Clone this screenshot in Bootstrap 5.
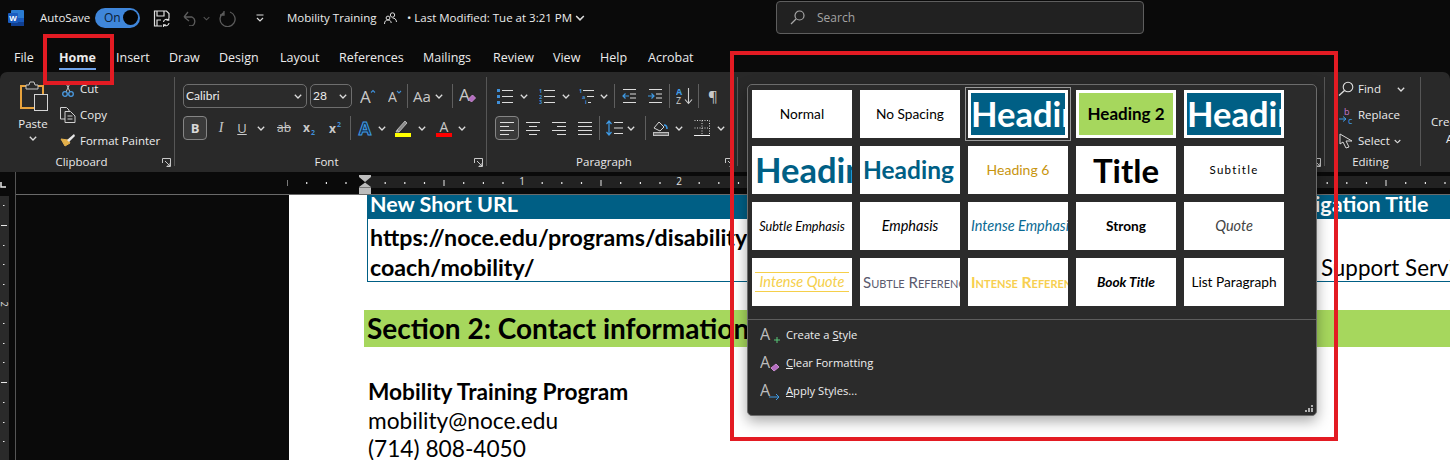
<!DOCTYPE html>
<html lang="en">
<head>
<meta charset="utf-8">
<title>Mobility Training - Word</title>
<link href="https://cdn.jsdelivr.net/npm/bootstrap@5.3.0/dist/css/bootstrap.min.css" rel="stylesheet">
<style>
html,body{height:460px;overflow:hidden}
body{background:#0a0a0a;color:#ececec;font-family:"Open Sans","Liberation Sans",sans-serif;font-size:11.5px;line-height:16px;position:relative;width:1450px}
svg{display:block;flex:none}
.ri{display:flex;align-items:center;justify-content:center;flex:none;height:24px}
.l1{margin-left:1px}.l2{margin-left:2px}.l3{margin-left:3px}.l4{margin-left:4px}.l5{margin-left:5px}.l6{margin-left:6px}.l7{margin-left:7px}.l8{margin-left:8px}.l9{margin-left:9px}.l10{margin-left:10px}.l11{margin-left:11px}.l12{margin-left:12px}.l13{margin-left:13px}.l14{margin-left:14px}.l15{margin-left:15px}.l16{margin-left:16px}.l18{margin-left:18px}.l20{margin-left:20px}
/* title bar */
.tbar{height:36px;padding-left:8px}
.auto-lbl{margin-left:16px;width:55px}
.pill{width:45px;height:20px;border-radius:10px;background:#3f86da;margin-top:-1px;color:#0b2036;padding:0 2px 0 9px;font-size:12px}
.knob{width:15px;height:15px;border-radius:50%;background:#050505}
.ttl{margin-left:23px;width:97px;white-space:nowrap}
.mod{white-space:nowrap;width:165px;flex:none}
.srch{margin-left:191px;width:368px;height:33px;margin-top:-1px;background:#212121;border:1px solid #5e5e5e;border-radius:4px;padding-left:13px;color:#a3a3a3;gap:12px;font-size:12px}
/* tabs */
.tabs{height:36px;padding:14px 0 0 14px}
.tb{flex:none;position:relative;white-space:nowrap;font-size:12.5px}
.t45{width:45px}.t57{width:57px}.t53{width:53px}.t50{width:50px}.t61{width:61px}.t59{width:59px}.t84{width:84px}.t70{width:70px}.t60{width:60px}.t47{width:47px}.t48{width:48px}
.tb-on{font-weight:700}
.tb-on::after{content:"";display:block;width:37px;height:2px;background:#6fa3ea;margin-top:2px}
/* ribbon */
.rib{height:100px;background:#292929;border-radius:7px 7px 0 0;padding-top:5px}
.grp{height:89px;border-right:1px solid #565656;flex:none;display:flex;flex-direction:column;padding-top:7px}
.g-clip{width:175px}.g-font{width:312px;padding-left:8px}.g-para{width:251px}.g-sty{width:587px}.g-edit{width:96px}
.gbody{height:64px;flex:none}
.glbl{display:flex;height:16px;margin-top:6px;color:#e8e8e8}
.glbl-t{flex:1;text-align:center}
.launch{width:16px;display:flex;justify-content:center;align-items:center}
.g-clip .glbl{padding-left:5px}
.rows{display:flex;flex-direction:column;margin-top:-8px}
.r3{height:26px;flex:none;display:flex;align-items:center;white-space:nowrap}
.pst{width:32px;margin-left:17px;margin-top:-3px;height:67px}
.pst-t{margin-top:2px;text-align:center}
.ico{width:16px;height:16px;display:flex;justify-content:center;margin-right:4px}
.combo{height:24px;border:1px solid #6e6e6e;border-radius:5px;padding:0 4px 0 2px;background:#2b2b2b;font-family:"Lato",sans-serif;font-size:12px}
.cb1{width:124px}.cb2{width:42px;margin-left:3px}
.w8{width:8px}.w10{width:10px}.w14{width:14px}.w16{width:16px}.w17{width:17px}.w18{width:18px}.w20{width:20px}
.vd{width:1px;height:24px;background:#5f5f5f;flex:none}
.tog{width:24px;height:24px;background:#3a3a3a;border:1px solid #858585;border-radius:4px}
.tog-b{font-weight:700;color:#d8d8d8;font-size:13px}
.fi{font-size:14px;font-style:italic;font-family:"Liberation Serif",serif;color:#c8c8c8}
.fu{font-size:13px;text-decoration:underline;color:#c8c8c8}
.fs{font-size:12px;text-decoration:line-through;color:#c8c8c8}
.fa{font-size:15px;color:#c8c8c8}
.r2{margin-top:8px}
.gx{padding-left:10px;padding-top:36px;white-space:nowrap;line-height:17px;overflow:hidden;flex:1}
.gx-b{margin-left:15px}
/* ruler */
.rrow{height:23px}
.corner{width:16px;padding:10px 0 0 0;flex:none;border-right:1px solid #555}
.rline{border-bottom:1px solid #6a6a6a;flex:1;overflow:hidden;position:relative}
/* doc */
.drow{height:265px}
.vrl{width:16px;flex:none;border-right:1px solid #555}
.side{width:273px;flex:none}
.pg{flex:1;background:#fff;color:#000;font-family:"Lato",sans-serif;overflow:hidden;position:relative}
.dt{margin-left:78px;width:1200px;border:1px solid #005f85;border-top:0;font-size:21.5px;line-height:30px;font-weight:700}
.dt-h{height:24px;background:#005f85;color:#fff;line-height:18px;white-space:nowrap;padding-left:2px}
.dt-navh{margin-left:709px}
.dt-b{white-space:nowrap;padding:3px 0 0 2px;height:62px;position:relative;font-size:23.2px}
.dt-rgt{font-weight:400;margin-left:690px;font-size:22.4px}
.sec{margin:28px 0 0 75px;height:37px;width:1100px;background:#a6d75d;font-size:28px;font-weight:700;line-height:37px;padding-left:3px;white-space:nowrap}
.addr{margin:31px 0 0 79px;font-size:22.7px;line-height:28.6px}
/* gallery */
.gal{position:absolute;left:747px;top:84px;width:570px;height:332px;background:#2b2b2b;border:1px solid #6c6c6c;border-radius:5px;box-shadow:0 5px 14px rgba(0,0,0,.35);z-index:5;color:#eee;padding:5px 0 0 4px}
.ggrid{display:grid;grid-template-columns:repeat(5,100px);grid-auto-rows:48px;gap:8px}
.sty{background:#fff;color:#000;display:flex;align-items:center;justify-content:center;overflow:hidden;white-space:nowrap;font-family:"Lato",sans-serif;font-size:13.7px;position:relative}
.sty-l{justify-content:flex-start;padding-left:3px}
.sty-sel{outline:1px solid #9a9a9a;outline-offset:2px;overflow:visible}
.boxb{width:94px;height:42px;background:#005f85;color:#fff;font-weight:700;font-size:34.5px;overflow:hidden;display:flex;align-items:center;line-height:42px;padding-left:0}
.boxg{width:94px;height:42px;background:#a6d75d;font-weight:700;font-size:17px;display:flex;align-items:center;justify-content:center}
.h4s{color:#005f85;font-weight:700;font-size:34.5px}
.h5s{color:#005f85;font-weight:700;font-size:24.5px}
.h6s{color:#c8950e;font-size:14px}
.tts{font-weight:700;font-size:33px}
.sbt{font-size:11.5px;letter-spacing:1.3px}
.it{font-style:italic}
.sz11{font-size:12.7px}
.szi{font-size:14.5px}
.blu{color:#0a6a94}
.bd{font-weight:700}
.quo{font-style:italic;color:#444;font-size:14.5px}
.iq{font-style:italic;color:#f5cf4a;border-top:1px solid #f5cf4a;border-bottom:1px solid #f5cf4a;width:94px;text-align:center;line-height:18px;font-size:14.5px}
.sr{font-variant:small-caps;color:#5a5a6e;font-size:15px}
.ir{font-variant:small-caps;color:#f7cf50;font-weight:700;font-size:15.5px}
.gsep{height:1px;background:#5d5d5d;margin:13px 0 0 -4px}
.gmenu{padding:1px 0 0 8px}
.gm{height:28px;display:flex;align-items:center;gap:6px;font-size:11.2px}
.grip{position:absolute;right:3px;bottom:3px}
/* annotation boxes */
.redA{position:absolute;left:730px;top:51px;width:608px;height:390px;border:4px solid #e31b23;z-index:9}
.redB{position:absolute;left:43px;top:34px;width:71px;height:51px;border:4px solid #e31b23;z-index:9}
</style>
</head>
<body>
<svg width="0" height="0" class="position-absolute">
  <defs>
    <symbol id="chev" viewBox="0 0 8 5"><path d="M.8.8 4 4 7.2.8" fill="none" stroke="#dcdcdc" stroke-width="1.3"/></symbol>
    <symbol id="lnch" viewBox="0 0 9 9"><path d="M.5 5V.5h8v8H4.5M3 3l5 5M8 5v3H5" fill="none" stroke="#c8c8c8" stroke-width="1"/></symbol>
  </defs>
</svg>

<header class="tbar d-flex align-items-center">
  <svg width="16" height="16" viewBox="0 0 16 16"><rect x="3" y="0" width="13" height="16" rx="1" fill="#2b7cd3"/><rect x="3" y="8" width="13" height="4" fill="#185abd"/><rect x="3" y="12" width="13" height="4" fill="#103f91"/><rect x="0" y="3" width="10" height="10" rx="1" fill="#1a5cbf"/><text x="5" y="11" font-size="8" font-weight="700" fill="#fff" text-anchor="middle" font-family="Liberation Sans">W</text></svg>
  <span class="auto-lbl">AutoSave</span>
  <span class="pill d-flex align-items-center justify-content-between"><span>On</span><span class="knob"></span></span>
  <svg class="l13" width="17" height="17" viewBox="0 0 17 17"><path d="M9 16H1.5V1h12l2.500 2.500V8M4 1v5h7V1M4 16v-6h4" fill="none" stroke="#e0e0e0" stroke-width="1.200"/><path d="M10.500 12a3 3 0 0 1 5-2M16 13a3 3 0 0 1-5 2M15.800 8v2.300h-2.300M10.500 17v-2.300h2.300" fill="none" stroke="#e0e0e0" stroke-width="1.100"/></svg>
  <svg class="l13" width="15" height="15" viewBox="0 0 15 15"><path d="M1 6h8a5 5 0 0 1 0 9H6M1 6l4-5M1 6l5 4" fill="none" stroke="#5c5c5c" stroke-width="1.300"/></svg>
  <svg class="l5" width="7" height="5" viewBox="0 0 8 5"><path d="M.8.8 4 4 7.200.8" fill="none" stroke="#555" stroke-width="1.200"/></svg>
  <svg class="l9" width="17" height="17" viewBox="0 0 17 17"><path d="M11 2a7.500 7.500 0 1 1-6 .5M5 1v4H1" fill="none" stroke="#5c5c5c" stroke-width="1.300"/></svg>
  <svg class="l20" width="8" height="8" viewBox="0 0 8 8"><path d="M.500 1h7M1 4l3 3 3-3" fill="none" stroke="#dcdcdc" stroke-width="1.200"/></svg>
  <span class="ttl">Mobility Training</span>
  <svg width="13" height="13" viewBox="0 0 13 13"><circle cx="8.500" cy="3" r="2.200" fill="none" stroke="#dcdcdc"/><circle cx="4" cy="6" r="1.900" fill="none" stroke="#dcdcdc"/><path d="M.500 12c0-3 1.500-4 3.500-4s3 1 3.200 3M8.500 6c2 0 3.800 1 4 4" fill="none" stroke="#dcdcdc"/></svg>
  <span class="mod l10">• Last Modified: Tue at 3:21 PM</span>
  <svg class="l3" width="10" height="6" viewBox="0 0 8 5"><use href="#chev"/></svg>
  <div class="srch d-flex align-items-center">
    <svg width="15" height="15" viewBox="0 0 15 15"><circle cx="9.500" cy="5.500" r="4.500" fill="none" stroke="#a8a8a8" stroke-width="1.200"/><path d="M6 9 1 14" stroke="#a8a8a8" stroke-width="1.300"/></svg>
    <span>Search</span>
  </div>
</header>

<nav class="tabs d-flex align-items-start">
  <span class="tb t45">File</span>
  <span class="tb t57 tb-on">Home</span>
  <span class="tb t53">Insert</span>
  <span class="tb t50">Draw</span>
  <span class="tb t61">Design</span>
  <span class="tb t59">Layout</span>
  <span class="tb t84">References</span>
  <span class="tb t70">Mailings</span>
  <span class="tb t60">Review</span>
  <span class="tb t47">View</span>
  <span class="tb t48">Help</span>
  <span class="tb">Acrobat</span>
</nav>

<section class="rib d-flex">
  <div class="grp g-clip">
    <div class="gbody d-flex">
      <div class="pst">
        <svg width="32" height="33" viewBox="0 0 32 33"><rect x="4" y="5" width="22" height="22" fill="none" stroke="#e8a33d" stroke-width="2"/><path d="M9 8V4h3l1-3h4l1 3h3v4z" fill="#292929" stroke="#c8c8c8"/><rect x="17.500" y="13.500" width="13" height="16" fill="#292929" stroke="#d5d5d5"/></svg>
        <div class="pst-t">Paste</div>
        <svg class="mx-auto mt-1" width="8" height="5" viewBox="0 0 8 5"><use href="#chev"/></svg>
      </div>
      <div class="rows l11">
        <div class="r3"><span class="ico"><svg width="12" height="16" viewBox="0 0 12 16"><path d="M3 0l5 11M9 0 4 11" stroke="#bdbdbd" fill="none"/><circle cx="3" cy="13" r="2.300" fill="none" stroke="#4a9ae0" stroke-width="1.300"/><circle cx="9" cy="13" r="2.300" fill="none" stroke="#4a9ae0" stroke-width="1.300"/></svg></span>Cut</div>
        <div class="r3"><span class="ico"><svg width="16" height="16" viewBox="0 0 16 16"><path d="M5 12H.5V.5h6L9 3v1M5 4.500h5.500L15 9v6.500H5zM7.500 9h5M7.500 12h5" fill="none" stroke="#d0d0d0"/></svg></span>Copy</div>
        <div class="r3"><span class="ico"><svg width="16" height="14" viewBox="0 0 16 14"><path d="M1 6l4 7 5-3-2-3z" fill="#e3b04b" stroke="#e3b04b"/><path d="M7 7l7-6 1 2-6 6z" fill="#e8e8e8"/></svg></span>Format Painter</div>
      </div>
    </div>
    <div class="glbl"><span class="glbl-t">Clipboard</span><span class="launch"><svg width="9" height="9" viewBox="0 0 9 9"><use href="#lnch"/></svg></span></div>
  </div>

  <div class="grp g-font">
    <div class="gbody">
      <div class="d-flex align-items-center">
        <div class="combo cb1 d-flex align-items-center justify-content-between">Calibri<svg width="8" height="5" viewBox="0 0 8 5"><use href="#chev"/></svg></div>
        <div class="combo cb2 d-flex align-items-center justify-content-between">28<svg width="8" height="5" viewBox="0 0 8 5"><use href="#chev"/></svg></div>
        <svg class="l8" width="16" height="17" viewBox="0 0 16 17"><text x="0" y="15" font-size="17" fill="#c8c8c8" font-family="Open Sans">A</text><path d="M11 4.500l2-2 2 2" fill="none" stroke="#3f8fd8" stroke-width="1.100"/></svg>
        <svg class="l12" width="14" height="14" viewBox="0 0 14 14"><text x="0" y="13" font-size="14" fill="#c8c8c8" font-family="Open Sans">A</text><path d="M9 2l2 2 2-2" fill="none" stroke="#3f8fd8" stroke-width="1.100"/></svg>
        <span class="vd l5"></span>
        <span class="ri w16 l6 fa">Aa</span>
        <svg class="l5" width="8" height="5" viewBox="0 0 8 5"><use href="#chev"/></svg>
        <span class="vd l9"></span>
        <svg class="l6" width="17" height="18" viewBox="0 0 17 18"><text x="0" y="14" font-size="17" fill="#c8c8c8" font-family="Open Sans">A</text><path d="M9.500 12l4-4 3 3-4 4z" fill="#b46cc0" stroke="#c98bd2"/></svg>
      </div>
      <div class="d-flex align-items-center r2">
        <span class="ri tog tog-b">B</span>
        <span class="ri w8 l10 fi">I</span>
        <span class="ri w14 l10 fu">U</span>
        <svg class="l8" width="8" height="5" viewBox="0 0 8 5"><use href="#chev"/></svg>
        <span class="ri w16 l11 fs">ab</span>
        <svg class="l10" width="16" height="16" viewBox="0 0 16 16"><text x="1" y="12" font-size="12" font-weight="700" fill="#c8c8c8" font-family="Open Sans">x</text><text x="9" y="15" font-size="7" font-weight="700" fill="#3f8fd8" font-family="Open Sans">2</text></svg>
        <svg class="l10" width="16" height="16" viewBox="0 0 16 16"><text x="1" y="13" font-size="12" font-weight="700" fill="#c8c8c8" font-family="Open Sans">x</text><text x="9" y="7" font-size="7" font-weight="700" fill="#3f8fd8" font-family="Open Sans">2</text></svg>
        <span class="vd l6"></span>
        <svg class="l6" width="16" height="16" viewBox="0 0 16 16"><text x="8" y="14.500" text-anchor="middle" font-size="18" font-weight="700" fill="#16324a" stroke="#3f9be6" stroke-width="1" font-family="Open Sans">A</text></svg>
        <svg class="l5" width="8" height="5" viewBox="0 0 8 5"><use href="#chev"/></svg>
        <svg class="l9" width="16" height="17" viewBox="0 0 16 17"><path d="M2 10l2 2 8-9-2-2zM2 10l-1 2h3" fill="#8a8a8a" stroke="#c8c8c8" stroke-width=".8"/><rect y="13" width="16" height="4" fill="#ffff00"/></svg>
        <svg class="l7" width="8" height="5" viewBox="0 0 8 5"><use href="#chev"/></svg>
        <svg class="l10" width="16" height="17" viewBox="0 0 16 17"><text x="8" y="12" text-anchor="middle" font-size="14" fill="#c8c8c8" font-family="Open Sans">A</text><rect y="13" width="16" height="4" fill="#ff0000"/></svg>
        <svg class="l6" width="8" height="5" viewBox="0 0 8 5"><use href="#chev"/></svg>
      </div>
    </div>
    <div class="glbl"><span class="glbl-t">Font</span><span class="launch"><svg width="9" height="9" viewBox="0 0 9 9"><use href="#lnch"/></svg></span></div>
  </div>

  <div class="grp g-para">
    <div class="gbody">
      <div class="d-flex align-items-center">
        <svg class="l10" width="16" height="16" viewBox="0 0 16 16"><path d="M0 1h3v3H0zM0 7h3v3H0zM0 13h3v3H0z" fill="#3f8fd8"/><path d="M5 2.500h11M5 8.500h11M5 14.500h11" stroke="#dcdcdc"/></svg>
        <svg class="l7" width="8" height="5" viewBox="0 0 8 5"><use href="#chev"/></svg>
        <svg class="l11" width="16" height="16" viewBox="0 0 16 16"><text x="0" y="5" font-size="5.500" font-weight="700" fill="#3f8fd8" font-family="Open Sans">1</text><text x="0" y="10.500" font-size="5.500" font-weight="700" fill="#3f8fd8" font-family="Open Sans">2</text><text x="0" y="16" font-size="5.500" font-weight="700" fill="#3f8fd8" font-family="Open Sans">3</text><path d="M5 2.500h11M5 8.500h11M5 14.500h11" stroke="#dcdcdc"/></svg>
        <svg class="l7" width="8" height="5" viewBox="0 0 8 5"><use href="#chev"/></svg>
        <svg class="l9" width="15" height="16" viewBox="0 0 15 16"><text x="0" y="5" font-size="5.500" font-weight="700" fill="#3f8fd8" font-family="Open Sans">1</text><text x="3" y="10.500" font-size="5.500" font-weight="700" fill="#3f8fd8" font-family="Open Sans">a</text><text x="6" y="16" font-size="5.500" font-weight="700" fill="#3f8fd8" font-family="Open Sans">i</text><path d="M4 2.500h11M8 8.500h7M9 14.500h3" stroke="#dcdcdc"/></svg>
        <svg class="l6" width="8" height="5" viewBox="0 0 8 5"><use href="#chev"/></svg>
        <span class="vd l6"></span>
        <svg class="l7" width="15" height="14" viewBox="0 0 15 14"><path d="M1 .5h13M8 5h6M8 9h6M1 13.500h13" stroke="#dcdcdc"/><path d="M7 7H1M3.500 4.500 1 7l2.500 2.500" fill="none" stroke="#3f9be6" stroke-width="1.200"/></svg>
        <svg class="l11" width="15" height="14" viewBox="0 0 15 14"><path d="M1 .5h13M8 5h6M8 9h6M1 13.500h13" stroke="#dcdcdc"/><path d="M0 7h6M3.500 4.500 6 7 3.500 9.500" fill="none" stroke="#3f9be6" stroke-width="1.200"/></svg>
        <span class="vd l6"></span>
        <svg class="l6" width="17" height="18" viewBox="0 0 17 18"><text x="0" y="8" font-size="9" font-weight="700" fill="#3f9be6" font-family="Open Sans">A</text><text x="0" y="17" font-size="9" fill="#d0d0d0" font-family="Open Sans">Z</text><path d="M12.500 1v15M9 12.500l3.500 4 3.500-4" fill="none" stroke="#d0d0d0" stroke-width="1.100"/></svg>
        <span class="vd l5"></span>
        <span class="ri w10 l9 fa">¶</span>
      </div>
      <div class="d-flex align-items-center r2">
        <span class="ri tog l8"><svg width="15" height="13" viewBox="0 0 15 13"><path d="M0 .5h14M0 4.500h9M0 8.500h14M0 12.500h9" stroke="#e0e0e0"/></svg></span>
        <svg class="l7" width="14" height="13" viewBox="0 0 14 13"><path d="M0 .5h14M3 4.500h8M0 8.500h14M3 12.500h8" stroke="#dcdcdc"/></svg>
        <svg class="l12" width="14" height="13" viewBox="0 0 14 13"><path d="M0 .5h14M5 4.500h9M0 8.500h14M5 12.500h9" stroke="#dcdcdc"/></svg>
        <svg class="l12" width="14" height="13" viewBox="0 0 14 13"><path d="M0 .5h14M0 4.500h14M0 8.500h14M0 12.500h14" stroke="#dcdcdc"/></svg>
        <span class="vd l7"></span>
        <svg class="l6" width="17" height="16" viewBox="0 0 17 16"><path d="M3 1v14M.5 4 3 1l2.500 3M.5 12 3 15l2.500-3" fill="none" stroke="#3f9be6" stroke-width="1.200"/><path d="M8 2.500h9M8 8h9M8 13.500h9" stroke="#dcdcdc"/></svg>
        <svg class="l4" width="8" height="5" viewBox="0 0 8 5"><use href="#chev"/></svg>
        <span class="vd l10"></span>
        <svg class="l7" width="16" height="16" viewBox="0 0 16 16"><path d="M1 8l5-6 5 5-4 4z" fill="none" stroke="#d5d5d5"/><path d="M11 5c2 0 3 1 3 4" fill="none" stroke="#3f9be6" stroke-width="1.500"/><rect x=".5" y="12.500" width="15" height="3" fill="#6e6e6e" stroke="#c0c0c0"/></svg>
        <svg class="l6" width="8" height="5" viewBox="0 0 8 5"><use href="#chev"/></svg>
        <svg class="l11" width="16" height="16" viewBox="0 0 16 16"><path d="M.5.500h15v15H.5M8 .5v15M.5 8h15" fill="none" stroke="#d8d8d8" stroke-dasharray="1 1.500"/><path d="M0 15.500h16" stroke="#f0f0f0"/></svg>
        <svg class="l7" width="8" height="5" viewBox="0 0 8 5"><use href="#chev"/></svg>
      </div>
    </div>
    <div class="glbl"><span class="glbl-t">Paragraph</span><span class="launch"><svg width="9" height="9" viewBox="0 0 9 9"><use href="#lnch"/></svg></span></div>
  </div>

  <div class="grp g-sty">
    <div class="gbody"></div>
    <div class="glbl"><span class="glbl-t">Styles</span><span class="launch"><svg width="9" height="9" viewBox="0 0 9 9"><use href="#lnch"/></svg></span></div>
  </div>

  <div class="grp g-edit">
    <div class="gbody">
      <div class="rows l13">
        <div class="r3"><span class="ico"><svg width="16" height="15" viewBox="0 0 16 15"><circle cx="10" cy="6" r="4.800" fill="none" stroke="#e0e0e0" stroke-width="1.100"/><path d="M6.500 9.500 1 14.500" stroke="#e0e0e0" stroke-width="1.300"/></svg></span>Find<svg class="l16" width="8" height="5" viewBox="0 0 8 5"><use href="#chev"/></svg></div>
        <div class="r3"><span class="ico"><svg width="16" height="18" viewBox="0 0 16 18"><text x="6" y="8" font-size="9" fill="#c678d0" font-family="Open Sans">b</text><text x="10" y="17" font-size="9" fill="#3f9be6" font-family="Open Sans">c</text><path d="M1 12h7M5 9.500 8 12l-3 2.500" fill="none" stroke="#3f9be6"/></svg></span>Replace</div>
        <div class="r3"><span class="ico"><svg width="15" height="16" viewBox="0 0 15 16"><path d="M1 1v10l3-2 3 6 3-1-3-6h6z" fill="none" stroke="#d8d8d8"/></svg></span>Select<svg class="l4" width="7" height="5" viewBox="0 0 8 5"><use href="#chev"/></svg></div>
      </div>
    </div>
    <div class="glbl"><span class="glbl-t ps-1 pe-2">Editing</span></div>
  </div>

  <div class="gx"><div>Create and</div><div class="gx-b">Adobe PDF</div></div>
</section>

<div class="rrow d-flex">
  <div class="corner"><svg width="6" height="6" viewBox="0 0 6 6"><path d="M1 0v5h5" fill="none" stroke="#e8e8e8" stroke-width="1.500"/></svg></div>
  <div class="rline">
    <svg width="1434" height="22" viewBox="16 172 1434 22">
      <defs>
        <pattern id="rt" x="365" y="172" width="157" height="22" patternUnits="userSpaceOnUse">
          <g fill="#e8e8e8"><rect x="19.600" y="10" width="1.200" height="2"/><rect x="39.200" y="10" width="1.200" height="2"/><rect x="58.900" y="10" width="1.200" height="2"/><rect x="78.500" y="8" width="1" height="6"/><rect x="98.100" y="10" width="1.200" height="2"/><rect x="117.800" y="10" width="1.200" height="2"/><rect x="137.400" y="10" width="1.200" height="2"/></g>
        </pattern>
      </defs>
      <rect x="365" y="176" width="1085" height="12" fill="#222"/>
      <rect x="287" y="172" width="1163" height="22" fill="url(#rt)"/>
      <g font-size="10" fill="#e0e0e0" font-family="Open Sans" text-anchor="middle"><text x="522" y="185">1</text><text x="679" y="185">2</text></g>
      <path d="M359 175h12v2l-6 5-6-5zM359 187l6-4.500 6 4.500v7h-12z" fill="#bcbcbc"/><path d="M359 187.500h12" stroke="#777"/>
    </svg>
  </div>
</div>

<div class="drow d-flex">
  <div class="vrl">
    <svg width="15" height="265" viewBox="0 195 15 265">
      <rect y="196" width="9" height="264" fill="#2a2a2a"/>
      <g fill="#e8e8e8"><rect x="3" y="205" width="1.500" height="1"/><rect x="1" y="225" width="6" height="1"/><rect x="3" y="245" width="1.500" height="1"/><rect x="3" y="264" width="1.500" height="1"/><rect x="3" y="284" width="1.500" height="1"/><rect x="3" y="323" width="1.500" height="1"/><rect x="3" y="343" width="1.500" height="1"/><rect x="3" y="362" width="1.500" height="1"/><rect x="1" y="382" width="6" height="1"/><rect x="3" y="402" width="1.500" height="1"/><rect x="3" y="422" width="1.500" height="1"/><rect x="3" y="441" width="1.500" height="1"/></g>
      <text transform="translate(1 304) rotate(90)" font-size="9" text-anchor="middle" fill="#e0e0e0" font-family="Open Sans">2</text>
    </svg>
  </div>
  <div class="side"></div>
  <main class="pg">
    <div class="dt">
      <div class="dt-h">New Short URL<span class="dt-navh">New Navigation Title</span></div>
      <div class="dt-b">https://noce.edu/programs/disability-support-services/<br>coach/mobility/<span class="dt-rgt">Disability Support Services</span></div>
    </div>
    <div class="sec">Section 2: Contact information</div>
    <div class="addr"><div class="bd">Mobility Training Program</div><div>mobility@noce.edu</div><div>(714) 808-4050</div></div>
  </main>
</div>

<aside class="gal">
  <div class="ggrid">
    <div class="sty">Normal</div>
    <div class="sty">No Spacing</div>
    <div class="sty sty-sel"><div class="boxb">Heading 1</div></div>
    <div class="sty"><div class="boxg">Heading 2</div></div>
    <div class="sty"><div class="boxb">Heading 3</div></div>

    <div class="sty sty-l h4s">Heading 4</div>
    <div class="sty sty-l h5s">Heading 5</div>
    <div class="sty h6s">Heading 6</div>
    <div class="sty tts">Title</div>
    <div class="sty sbt">Subtitle</div>

    <div class="sty it sz11">Subtle Emphasis</div>
    <div class="sty it szi">Emphasis</div>
    <div class="sty sty-l it szi blu">Intense Emphasis</div>
    <div class="sty bd">Strong</div>
    <div class="sty quo">Quote</div>

    <div class="sty"><div class="iq">Intense Quote</div></div>
    <div class="sty sty-l sr">Subtle Reference</div>
    <div class="sty sty-l ir">Intense Reference</div>
    <div class="sty bd it">Book Title</div>
    <div class="sty">List Paragraph</div>
  </div>
  <div class="gsep"></div>
  <div class="gmenu">
    <div class="gm"><svg width="20" height="20" viewBox="0 0 20 20"><text x="0" y="15" font-size="16" fill="#bdbdbd" font-family="Open Sans">A</text><path d="M14 15h6M17 12v6" stroke="#58c878" stroke-width="1"/></svg><span><span>Create a </span><u>S</u>tyle</span></div>
    <div class="gm"><svg width="20" height="20" viewBox="0 0 20 20"><text x="0" y="15" font-size="16" fill="#bdbdbd" font-family="Open Sans">A</text><path d="M11 15l5-4 3 3-5 4z" fill="#b46cc0" stroke="#c98bd2"/></svg><span><u>C</u>lear Formatting</span></div>
    <div class="gm"><svg width="20" height="20" viewBox="0 0 20 20"><text x="0" y="15" font-size="16" fill="#bdbdbd" font-family="Open Sans">A</text><path d="M9 16h10M16 13l3 3-3 3" fill="none" stroke="#3f9be6"/></svg><span><u>A</u>pply Styles...</span></div>
  </div>
  <svg class="grip" width="8" height="7" viewBox="0 0 8 7"><path d="M6 0h2v2H6zM3 3h2v2H3zM6 3h2v2H6zM0 5h2v2H0zM3 5h2v2H3zM6 5h2v2H6z" fill="#b0b0b0"/></svg>
</aside>

<div class="redA"></div>
<div class="redB"></div>

<script src="https://cdn.jsdelivr.net/npm/bootstrap@5.3.0/dist/js/bootstrap.bundle.min.js"></script>
</body>
</html>
